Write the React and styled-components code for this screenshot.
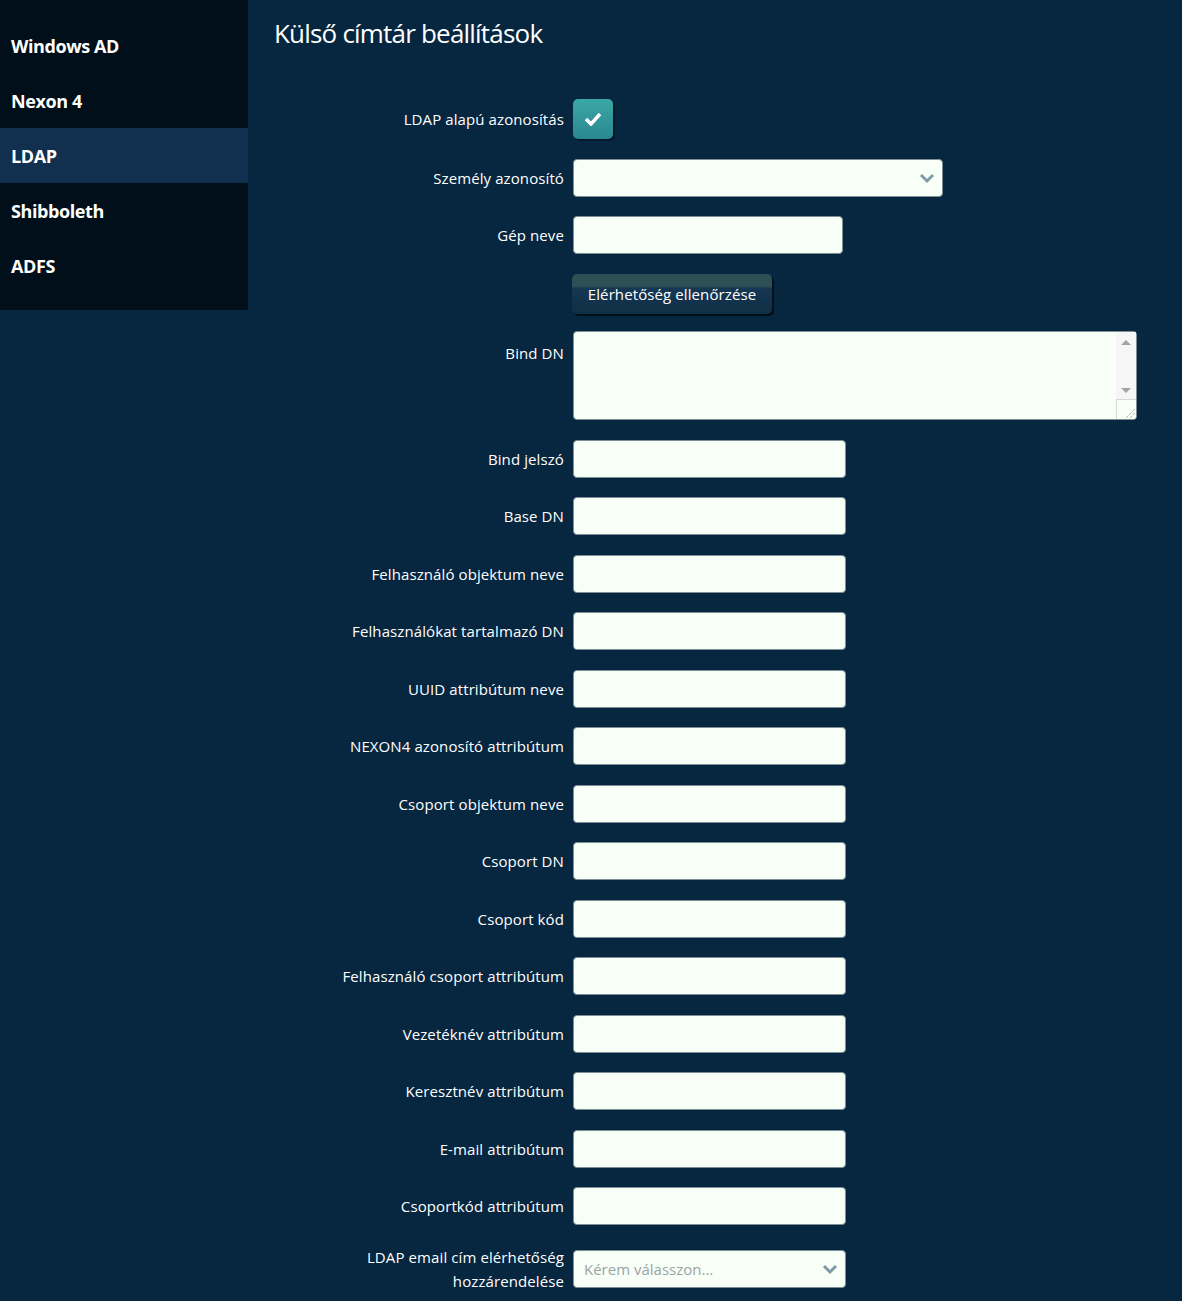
import styled, { createGlobalStyle } from "styled-components"

const GlobalStyle = createGlobalStyle`
  body {
    margin: 0;
    background: #07263f;
    font-family: "Open Sans", "Liberation Sans", sans-serif;
    color: #ffffff;
  }
`

const Page = styled.div`
  display: flex;
  align-items: flex-start;
  min-height: 1301px;
`

const Sidebar = styled.nav`
  width: 248px;
  flex-shrink: 0;
  background: #000f19;
  padding: 18px 0 17px;
`

const NavItem = styled.div`
  height: 55px;
  display: flex;
  align-items: center;
  padding-left: 11px;
  font-size: 18px;
  font-weight: 700;
  letter-spacing: -0.4px;
  background: ${(p) => (p.active ? "#11304f" : "transparent")};
`

const Main = styled.main`
  flex: 1;
  padding: 13px 26px 0;
`

const Title = styled.h1`
  margin: 0;
  font-size: 26px;
  font-weight: 400;
  line-height: 40px;
  letter-spacing: -0.8px;
`

const Form = styled.div`
  margin-top: 46px;
  display: flex;
  flex-direction: column;
  gap: 19.5px;
`

const Row = styled.div`
  display: flex;
  align-items: ${(p) => (p.top ? "flex-start" : "center")};
`

const Label = styled.label`
  width: 299px;
  flex-shrink: 0;
  box-sizing: border-box;
  padding-right: 9px;
  padding-top: ${(p) => (p.top ? "10px" : "0")};
  text-align: right;
  font-size: 15px;
  line-height: 24px;
  letter-spacing: 0.1px;
`

const Check = styled.div`
  width: 40px;
  height: 40px;
  border-radius: 5px;
  background: linear-gradient(#3ba8a4, #2a8790);
  box-shadow: 2px 2px 0 #041a2a;
  display: flex;
  align-items: center;
  justify-content: center;
`

const Input = styled.input`
  box-sizing: border-box;
  width: ${(p) => p.w || 273}px;
  height: 38px;
  background: #f8fff6;
  border: 1px solid #7d8e96;
  border-radius: 4px;
  outline: none;
  padding: 0 10px;
  font-family: inherit;
  font-size: 15px;
`

const SelectWrap = styled.div`
  position: relative;
  width: ${(p) => p.w}px;
`

const Select = styled.select`
  appearance: none;
  box-sizing: border-box;
  width: 100%;
  height: 38px;
  background: #f8fff6;
  border: 1px solid #7d8e96;
  border-radius: 4px;
  outline: none;
  padding: 0 10px;
  font-family: inherit;
  font-size: 15px;
  color: #9aa3a8;
`

const Chevron = styled.svg`
  position: absolute;
  right: 8px;
  top: 13px;
  pointer-events: none;
`

const Button = styled.button`
  margin-left: -1px;
  margin-bottom: -2px;
  width: 200px;
  height: 40px;
  border: none;
  border-radius: 5px;
  color: #ffffff;
  font-family: inherit;
  font-size: 15px;
  letter-spacing: 0.1px;
  background: linear-gradient(#2e4f55 0%, #2e4f55 30%, #163852 36%, #143350 55%, #0f3043 100%);
  box-shadow: 2px 2px 0 #01101a;
  cursor: pointer;
`

const AreaWrap = styled.div`
  position: relative;
  width: 564px;
  height: 89px;
`

const TextArea = styled.textarea`
  box-sizing: border-box;
  display: block;
  width: 100%;
  height: 100%;
  background: #f8fff6;
  border: 1px solid #7d8e96;
  border-radius: 4px;
  outline: none;
  resize: none;
  padding: 4px 24px 4px 6px;
  font-family: inherit;
  font-size: 15px;
`

/* fake scrollbar drawn over the textarea's right edge */
const ScrollStrip = styled.div`
  position: absolute;
  top: 1px;
  right: 1px;
  bottom: 1px;
  width: 20px;
  display: flex;
  flex-direction: column;
  pointer-events: none;
`

const Track = styled.div`
  flex: 1;
  background: #f6f6f6;
  display: flex;
  flex-direction: column;
  justify-content: space-between;
  align-items: center;
  padding: 8px 0 6px;
`

const Arrow = styled.div`
  width: 0;
  height: 0;
  border-left: 5px solid transparent;
  border-right: 5px solid transparent;
  border-${(p) => (p.down ? "top" : "bottom")}: 5px solid #a3a3a3;
`

const Corner = styled.div`
  height: 20px;
  box-sizing: border-box;
  border-top: 1px solid #d6d6d6;
  border-left: 1px solid #d6d6d6;
  background: #f8fff6;
  border-bottom-right-radius: 3px;
  display: flex;
  align-items: flex-end;
  justify-content: flex-end;
`

const ChevronIcon = () => (
  <Chevron width="16" height="12" viewBox="0 0 16 12">
    <polyline points="2,3 8,9 14,3" fill="none" stroke="#7f9aa8" strokeWidth="3" />
  </Chevron>
)

const fields = [
  "Bind jelszó",
  "Base DN",
  "Felhasználó objektum neve",
  "Felhasználókat tartalmazó DN",
  "UUID attribútum neve",
  "NEXON4 azonosító attribútum",
  "Csoport objektum neve",
  "Csoport DN",
  "Csoport kód",
  "Felhasználó csoport attribútum",
  "Vezetéknév attribútum",
  "Keresztnév attribútum",
  "E-mail attribútum",
  "Csoportkód attribútum",
]

const menu = ["Windows AD", "Nexon 4", "LDAP", "Shibboleth", "ADFS"]

const App = () => {
  return (
    <Page>
      <GlobalStyle />
      <Sidebar>
        {menu.map((m) => (
          <NavItem key={m} active={m === "LDAP"}>
            {m}
          </NavItem>
        ))}
      </Sidebar>
      <Main>
        <Title>Külső címtár beállítások</Title>
        <Form>
          <Row>
            <Label>LDAP alapú azonosítás</Label>
            <Check>
              <svg width="18" height="14" viewBox="0 0 18 14">
                <polyline points="2,7 7,12 16,2" fill="none" stroke="#ffffff" strokeWidth="3.5" />
              </svg>
            </Check>
          </Row>
          <Row>
            <Label>Személy azonosító</Label>
            <SelectWrap w={370}>
              <Select defaultValue="">
                <option value=""></option>
              </Select>
              <ChevronIcon />
            </SelectWrap>
          </Row>
          <Row>
            <Label>Gép neve</Label>
            <Input w={270} />
          </Row>
          <Row>
            <Label />
            <Button>Elérhetőség ellenőrzése</Button>
          </Row>
          <Row top>
            <Label top>Bind DN</Label>
            <AreaWrap>
              <TextArea />
              <ScrollStrip>
                <Track>
                  <Arrow />
                  <Arrow down />
                </Track>
                <Corner>
                  <svg width="12" height="12" viewBox="0 0 12 12">
                    <line x1="2" y1="11" x2="11" y2="2" stroke="#8a8a8a" strokeWidth="1" strokeDasharray="1 1" />
                    <line x1="6" y1="11" x2="11" y2="6" stroke="#8a8a8a" strokeWidth="1" strokeDasharray="1 1" />
                  </svg>
                </Corner>
              </ScrollStrip>
            </AreaWrap>
          </Row>
          {fields.map((f) => (
            <Row key={f}>
              <Label>{f}</Label>
              <Input type={f === "Bind jelszó" ? "password" : "text"} />
            </Row>
          ))}
          <Row>
            <Label>
              LDAP email cím elérhetőség
              <br />
              hozzárendelése
            </Label>
            <SelectWrap w={273}>
              <Select defaultValue="">
                <option value="">Kérem válasszon...</option>
              </Select>
              <ChevronIcon />
            </SelectWrap>
          </Row>
        </Form>
      </Main>
    </Page>
  )
}

export default App
